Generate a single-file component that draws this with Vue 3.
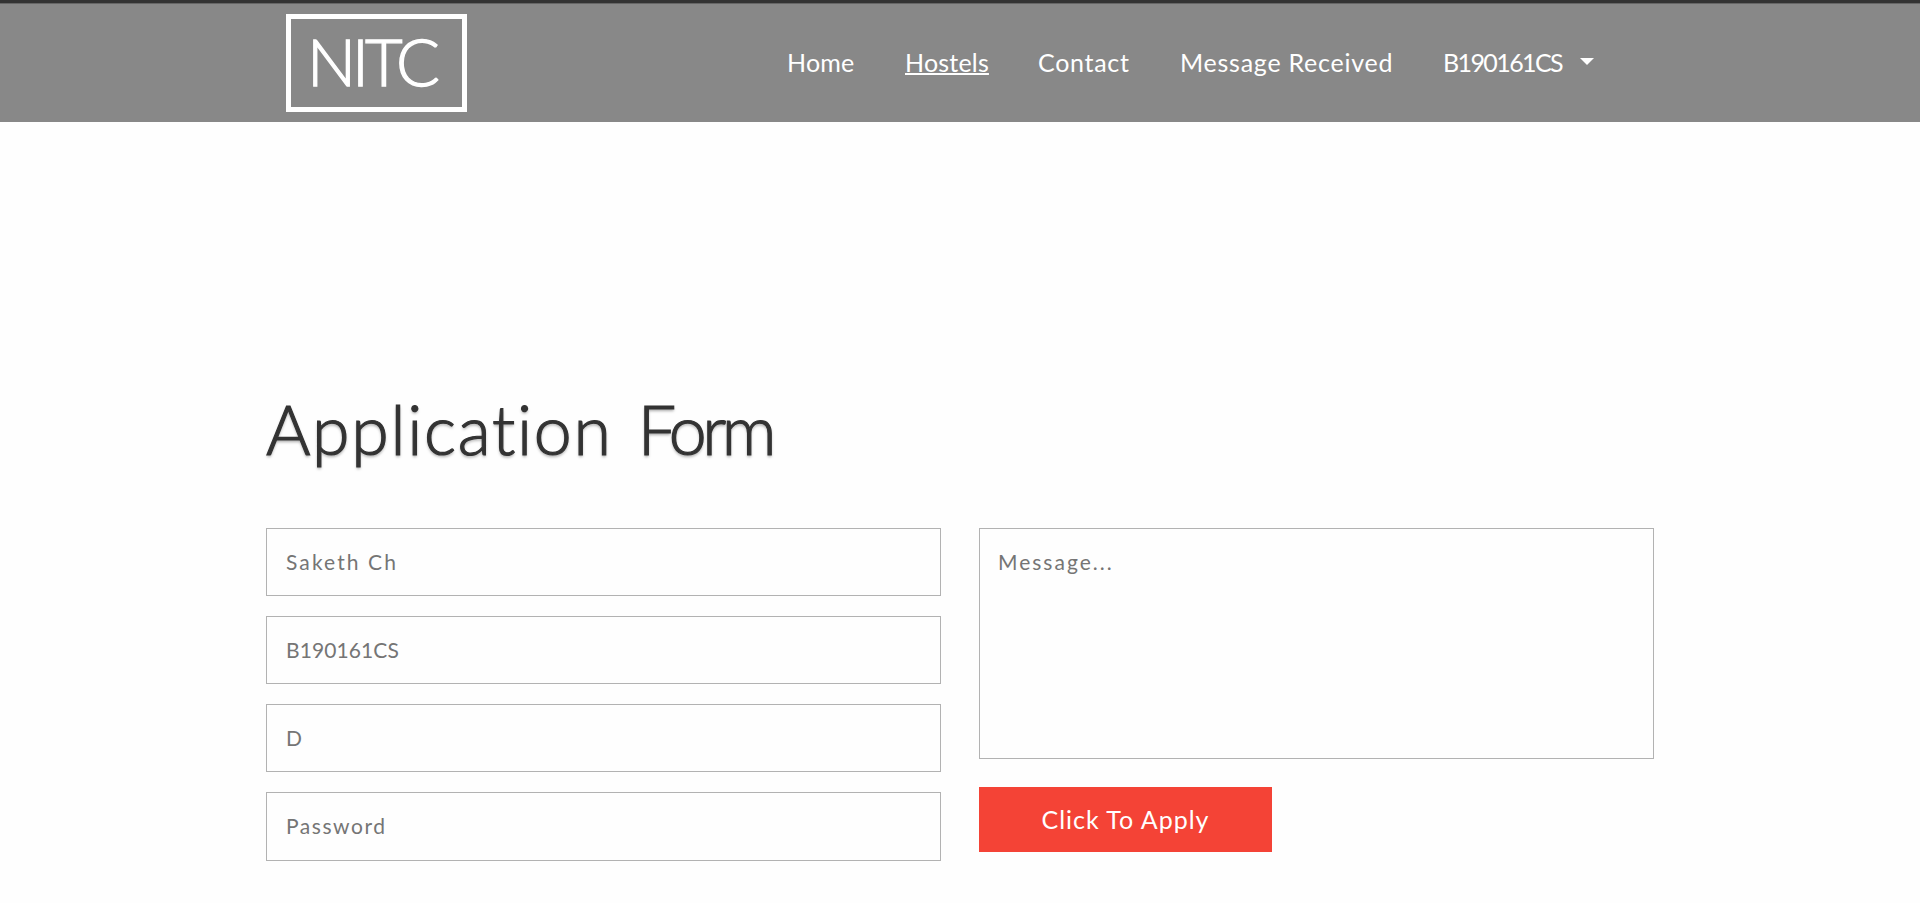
<script setup>
const links = [
  { label: 'Home', cls: 'home' },
  { label: 'Hostels', cls: 'hostels' },
  { label: 'Contact', cls: 'contact' },
  { label: 'Message Received', cls: 'received' },
]
const fields = [
  { placeholder: 'Saketh Ch', type: 'text', cls: 'wide' },
  { placeholder: 'B190161CS', type: 'text', cls: 'roll' },
  { placeholder: 'D', type: 'text', cls: 'wide' },
  { placeholder: 'Password', type: 'password', cls: 'pass' },
]
</script>

<template>
  <div class="page">
    <header class="header">
      <a class="logo"><span>NITC</span></a>
      <nav class="nav">
        <a v-for="l in links" :key="l.cls" :class="l.cls">{{ l.label }}</a>
        <a class="user">B190161CS</a>
        <svg class="caret" width="14" height="7" viewBox="0 0 14 7"><path d="M0 0H14L7 7Z" fill="#fff" /></svg>
      </nav>
    </header>

    <main class="content">
      <h1 class="title">Application <span class="form-word">Form</span></h1>
      <form class="form" @submit.prevent>
        <div class="column">
          <input v-for="f in fields" :key="f.placeholder" :class="['field', f.cls]" :type="f.type" :placeholder="f.placeholder" />
        </div>
        <div class="column side">
          <textarea class="field message" placeholder="Message..."></textarea>
          <button class="apply" type="submit">Click To Apply</button>
        </div>
      </form>
    </main>
  </div>
</template>

<style>
body {
  margin: 0;
  background: #fefefe;
}
</style>

<style scoped>
.page {
  height: 903px;
  overflow: hidden;
  font-family: Lato, "Liberation Sans", sans-serif;
}
.header {
  box-sizing: border-box;
  display: flex;
  height: 122px;
  padding: 10px 0 0 286px;
  border-top: 3px solid #333;
  background: #888;
  box-shadow: inset 0 1px 0 #666;
  color: #fff;
}
.logo {
  box-sizing: border-box;
  width: 181px;
  height: 98px;
  margin-top: 1px;
  padding-left: 16px;
  border: 5px solid #fff;
  font-size: 65px;
  font-weight: 300;
  line-height: 84px;
  letter-spacing: -4px;
  -webkit-text-stroke: 1.3px #fff;
}
.nav {
  display: grid;
  grid-template-columns: 118px 133px 142px 263px 137px 14px;
  margin-left: 320px;
  height: 98px;
  font-size: 25px;
  line-height: 30px;
  padding-top: 34px;
  box-sizing: border-box;
  white-space: nowrap;
}
.home {
  letter-spacing: 0.2px;
}
.hostels {
  justify-self: start;
  height: 29px;
  letter-spacing: 0.2px;
  text-decoration: underline;
  text-decoration-thickness: 2px;
  text-decoration-skip-ink: none;
  text-underline-offset: 1px;
}
.contact {
  letter-spacing: 0.7px;
}
.received {
  letter-spacing: 0.75px;
}
.user {
  letter-spacing: -1.6px;
}
.caret {
  margin-top: 11px;
}
.content {
  width: 1388px;
  margin-left: 266px;
}
.title {
  margin: 0;
  padding-top: 261px;
  height: 145px;
  color: #333;
  font-size: 68px;
  font-weight: 300;
  line-height: 92px;
  letter-spacing: 1.7px;
  word-spacing: 5px;
  text-shadow: 0 2px 3px rgba(0, 0, 0, 0.35);
  -webkit-text-stroke: 1.2px #333;
}
.form-word {
  letter-spacing: -4.5px;
}
.form {
  display: grid;
  grid-template-columns: 675px 675px;
  gap: 38px;
}
.column {
  display: flex;
  flex-direction: column;
  gap: 20px;
}
.side {
  gap: 28px;
  align-items: flex-start;
}
.field {
  box-sizing: border-box;
  width: 675px;
  height: 68px;
  margin: 0;
  padding: 0 18px 2px 19px;
  border: 1px solid #b2b2b2;
  border-radius: 0;
  outline: none;
  background: transparent;
  color: #757575;
  font-family: inherit;
  font-size: 21px;
  resize: none;
}
.field::placeholder {
  color: #757575;
  opacity: 1;
}
.wide {
  letter-spacing: 2.1px;
}
.roll {
  letter-spacing: 0.1px;
}
.pass {
  height: 69px;
  letter-spacing: 1.55px;
}
.message {
  height: 231px;
  padding: 20px 18px;
  letter-spacing: 2px;
  line-height: 26px;
}
.apply {
  width: 293px;
  height: 65px;
  padding: 0 0 2px;
  border: 0;
  background: #f44336;
  color: #fff;
  font-family: inherit;
  font-size: 25px;
  letter-spacing: 1px;
}
</style>
